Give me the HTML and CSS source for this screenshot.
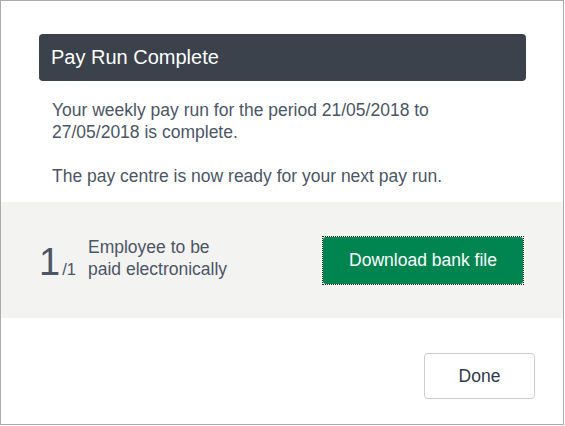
FILE: index.html
```html
<!DOCTYPE html>
<html>
<head>
<meta charset="utf-8">
<link rel="stylesheet" href="styles.css">
</head>
<body>
<div class="dialog">
  <div class="header">Pay Run Complete</div>
  <div class="content">
    <p class="period">Your weekly pay run for the period 21/05/2018 to 27/05/2018 is complete.</p>
    <p>The pay centre is now ready for your next pay run.</p>
  </div>
  <div class="band">
    <div class="count"><span class="big">1</span><span class="small">/1</span></div>
    <div class="label">Employee to be<br>paid electronically</div>
    <div class="focus"><button class="primary">Download bank file</button></div>
  </div>
  <div class="footer">
    <button class="secondary">Done</button>
  </div>
</div>
</body>
</html>
```

FILE: styles.css
```css
html, body {
  margin: 0;
  padding: 0;
  background: #ffffff;
}
body {
  font-family: "Liberation Sans", Arial, sans-serif;
  color: #4b5665;
}
.dialog {
  box-sizing: border-box;
  width: 564px;
  height: 425px;
  border: 1px solid #ababab;
  display: flex;
  flex-direction: column;
}
.header {
  box-sizing: border-box;
  margin: 33px 37px 0 38px;
  height: 47px;
  background: #3b424c;
  border-radius: 4px;
  color: #ffffff;
  font-size: 20px;
  line-height: 47px;
  padding-left: 12px;
}
.content {
  padding: 0 30px 0 51px;
  margin-top: 18px;
  font-size: 17.5px;
  line-height: 22px;
}
.content p {
  margin: 0 0 22px 0;
}
.content .period {
  max-width: 390px;
}
.content p:last-child {
  margin-bottom: 0;
}
.band {
  box-sizing: border-box;
  margin-top: 15px;
  height: 116px;
  background: #f3f3f2;
  display: flex;
  align-items: center;
  padding-left: 38px;
}
.count {
  display: flex;
  align-items: baseline;
  width: 49px;
  margin-top: 4px;
}
.big {
  font-size: 38px;
  line-height: 38px;
}
.small {
  font-size: 16.5px;
  margin-left: 2px;
}
.label {
  font-size: 17.5px;
  line-height: 22px;
  width: 234px;
  margin-bottom: 4px;
}
.focus {
  border: 1px dotted #222;
  display: flex;
}
.primary {
  width: 200px;
  height: 47px;
  background: #008550;
  color: #ffffff;
  border: none;
  border-radius: 3px;
  font-family: "Liberation Sans", Arial, sans-serif;
  font-size: 17.5px;
  padding: 0;
}
.footer {
  display: flex;
  justify-content: flex-end;
  padding-right: 28px;
  margin-top: 35px;
}
.secondary {
  width: 111px;
  height: 46px;
  background: #ffffff;
  border: 1px solid #c8cbce;
  border-radius: 4px;
  color: #2f3b48;
  font-family: "Liberation Sans", Arial, sans-serif;
  font-size: 17.5px;
  padding: 0;
}
```
